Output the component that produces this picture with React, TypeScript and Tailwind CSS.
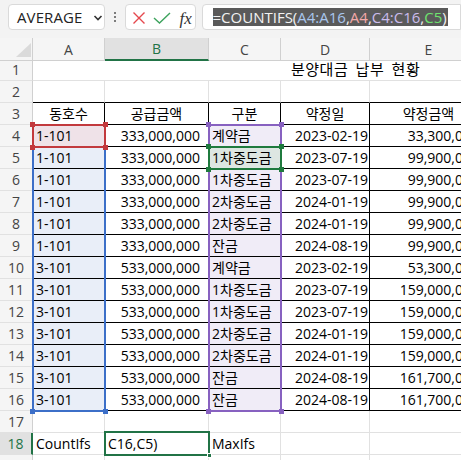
import React from "react";

const data: string[][] = [
  ["1-101", "333,000,000", "계약금", "2023-02-19", "33,300,000"],
  ["1-101", "333,000,000", "1차중도금", "2023-07-19", "99,900,000"],
  ["1-101", "333,000,000", "1차중도금", "2023-07-19", "99,900,000"],
  ["1-101", "333,000,000", "2차중도금", "2024-01-19", "99,900,000"],
  ["1-101", "333,000,000", "2차중도금", "2024-01-19", "99,900,000"],
  ["1-101", "333,000,000", "잔금", "2024-08-19", "99,900,000"],
  ["3-101", "533,000,000", "계약금", "2023-02-19", "53,300,000"],
  ["3-101", "533,000,000", "1차중도금", "2023-07-19", "159,000,000"],
  ["3-101", "533,000,000", "1차중도금", "2023-07-19", "159,000,000"],
  ["3-101", "533,000,000", "2차중도금", "2024-01-19", "159,000,000"],
  ["3-101", "533,000,000", "2차중도금", "2024-01-19", "159,000,000"],
  ["3-101", "533,000,000", "잔금", "2024-08-19", "161,700,000"],
  ["3-101", "533,000,000", "잔금", "2024-08-19", "161,700,000"],
];

const ROW = "grid grid-cols-[33px_72px_104px_72px_89px_118px] h-[22px]";
const HDR =
  "h-[22px] flex items-center justify-center bg-[#f5f5f5] border-r border-b border-r-[#d0d0d0] border-b-[#e1e1e1] text-[14px] text-[#444]";
const GCELL = "h-[22px] flex items-center overflow-hidden whitespace-nowrap border-r border-b border-[#e1e1e1]";
const TCELL = "h-[22px] flex items-center overflow-hidden whitespace-nowrap border-r border-b border-black";

function Corners({ c }: { c: string }) {
  return (
    <>
      <div className={`absolute -left-[2px] -top-[2px] w-[5px] h-[5px] ${c}`} />
      <div className={`absolute -right-[2px] -top-[2px] w-[5px] h-[5px] ${c}`} />
      <div className={`absolute -left-[2px] -bottom-[2px] w-[5px] h-[5px] ${c}`} />
      <div className={`absolute -right-[2px] -bottom-[2px] w-[5px] h-[5px] ${c}`} />
    </>
  );
}

export default function App() {
  return (
    <div className="w-[461px] h-[460px] overflow-hidden bg-white font-['Open_Sans','Noto_Sans_CJK_KR',sans-serif] text-black">
      {/* Toolbar */}
      <div className="h-[38px] bg-[#f3f3f3] flex items-start pt-[4px] pl-[8px]">
        <div className="w-[101px] h-[26px] bg-white border border-[#dadada] rounded-[4px] flex items-center pl-[8px] relative">
          <span className="text-[15px] text-[#222] tracking-[0.1px]">AVERAGE</span>
          <svg className="absolute left-[84px] top-[9px]" width="10" height="8" viewBox="0 0 10 8">
            <path d="M1.5 2 L5 5.5 L8.5 2" fill="none" stroke="#333" strokeWidth="1.6" />
          </svg>
        </div>
        <div className="w-[21px] h-[26px] flex flex-col items-center justify-center gap-[2px]">
          <div className="w-[2px] h-[2px] rounded-full bg-[#555]" />
          <div className="w-[2px] h-[2px] rounded-full bg-[#555]" />
          <div className="w-[2px] h-[2px] rounded-full bg-[#555]" />
        </div>
        <div className="w-[73px] h-[26px] bg-white border border-[#dadada] rounded-[4px] flex items-center relative">
          <svg className="absolute left-[6px] top-[6px]" width="14" height="14" viewBox="0 0 14 14">
            <path d="M1.5 1.5 L12.5 12.5 M12.5 1.5 L1.5 12.5" stroke="#e5484d" strokeWidth="1.4" fill="none" />
          </svg>
          <svg className="absolute left-[27px] top-[7px]" width="18" height="12" viewBox="0 0 18 12">
            <path d="M1 6 L6.5 11 L17 1" stroke="#3da35d" strokeWidth="1.4" fill="none" />
          </svg>
          <span className="absolute left-[53px] top-[1px] font-['Liberation_Serif',serif] italic text-[17px] text-[#333]">fx</span>
        </div>
        <div className="ml-[6px] w-[270px] h-[26px] bg-white border border-[#dadada] rounded-l-[4px] flex items-center pl-[10px]">
          <span className="bg-[#5a5a5a] text-[15px] leading-[18px] h-[18px] pr-[1px] whitespace-nowrap">
            <span className="text-[#f2f2f2]">=COUNTIFS(</span>
            <span className="text-[#a9c6ee]">A4:A16</span>
            <span className="text-[#f2f2f2]">,</span>
            <span className="text-[#f3a9a9]">A4</span>
            <span className="text-[#f2f2f2]">,</span>
            <span className="text-[#cbbcec]">C4:C16</span>
            <span className="text-[#f2f2f2]">,</span>
            <span className="text-[#6fe36f]">C5</span>
            <span className="text-[#f2f2f2]">)</span>
          </span>
        </div>
      </div>

      {/* Grid */}
      <div className="relative w-[488px]">
        {/* Column headers */}
        <div className="grid grid-cols-[33px_72px_104px_72px_89px_118px] h-[21px]">
          <div className="relative bg-[#f5f5f5] border-r border-b border-[#d0d0d0]">
            <svg className="absolute left-[16px] top-[5px]" width="15" height="14" viewBox="0 0 15 14">
              <path d="M15 0 L15 14 L0 14 Z" fill="#dadada" />
            </svg>
          </div>
          <div className="flex items-center justify-center bg-[#f5f5f5] border-r border-b border-[#d0d0d0] text-[14px] text-[#444]">A</div>
          <div className="flex items-center justify-center bg-[#e1e1e1] border-r border-[#d0d0d0] border-b-2 border-b-[#217346] text-[14px] text-[#217346]">B</div>
          <div className="flex items-center justify-center bg-[#f5f5f5] border-r border-b border-[#d0d0d0] text-[14px] text-[#444]">C</div>
          <div className="flex items-center justify-center bg-[#f5f5f5] border-r border-b border-[#d0d0d0] text-[14px] text-[#444]">D</div>
          <div className="flex items-center justify-center bg-[#f5f5f5] border-r border-b border-[#d0d0d0] text-[14px] text-[#444]">E</div>
        </div>

        {/* Row 1 */}
        <div className={ROW}>
          <div className={HDR}>1</div>
          <div className="col-span-5 h-[22px] flex items-center border-b border-[#e1e1e1] pl-[258px] text-[15px] tracking-[0.5px] [word-spacing:3px] whitespace-nowrap">
            분양대금 납부 현황
          </div>
        </div>

        {/* Row 2 */}
        <div className={ROW}>
          <div className={HDR}>2</div>
          <div className="h-[22px] border-r border-r-[#e1e1e1] border-b border-b-black" />
          <div className="h-[22px] border-r border-r-[#e1e1e1] border-b border-b-black" />
          <div className="h-[22px] border-r border-r-[#e1e1e1] border-b border-b-black" />
          <div className="h-[22px] border-r border-r-[#e1e1e1] border-b border-b-black" />
          <div className="h-[22px] border-r border-r-[#e1e1e1] border-b border-b-black" />
        </div>

        {/* Row 3 header */}
        <div className={ROW}>
          <div className={HDR}>3</div>
          <div className={`${TCELL} justify-center text-[14px]`}>동호수</div>
          <div className={`${TCELL} justify-center text-[14px]`}>공급금액</div>
          <div className={`${TCELL} justify-center text-[14px]`}>구분</div>
          <div className={`${TCELL} justify-center text-[14px]`}>약정일</div>
          <div className={`${TCELL} justify-center text-[14px]`}>약정금액</div>
        </div>

        {/* Data rows */}
        {data.map((r, i) => {
          const n = i + 4;
          const aBg = i === 0 ? "bg-[#efe2e8]" : "bg-[#e9eef8]";
          const cBg = i === 1 ? "bg-[#dde6e2]" : "bg-[#f0ecf7]";
          return (
            <div key={n} className={ROW}>
              <div className={HDR}>{n}</div>
              <div className={`${TCELL} ${aBg} pl-[3px] text-[14px]`}>{r[0]}</div>
              <div className={`${TCELL} justify-end pr-[8px] text-[14px]`}>{r[1]}</div>
              <div className={`${TCELL} ${cBg} pl-[3px] text-[14px]`}>{r[2]}</div>
              <div className={`${TCELL} justify-end pr-[1px] text-[14px]`}>{r[3]}</div>
              <div className={`${TCELL} justify-end pr-[8px] text-[14px]`}>{r[4]}</div>
            </div>
          );
        })}

        {/* Row 17 */}
        <div className={ROW}>
          <div className={HDR}>17</div>
          <div className={GCELL} />
          <div className={GCELL} />
          <div className={GCELL} />
          <div className={GCELL} />
          <div className={GCELL} />
        </div>

        {/* Row 18 */}
        <div className={ROW}>
          <div className="h-[22px] flex items-center justify-center bg-[#e1e1e1] border-r-2 border-r-[#217346] border-b border-b-[#e1e1e1] text-[14px] text-[#217346]">18</div>
          <div className={`${GCELL} pl-[3px] text-[14px]`}>CountIfs</div>
          <div className={`${GCELL} pl-[3px] text-[14px]`}>C16,C5)</div>
          <div className={`${GCELL} pl-[3px] text-[14px]`}>MaxIfs</div>
          <div className={GCELL} />
          <div className={GCELL} />
        </div>

        {/* Row 19 */}
        <div className={ROW}>
          <div className={HDR}>19</div>
          <div className={GCELL} />
          <div className={GCELL} />
          <div className={GCELL} />
          <div className={GCELL} />
          <div className={GCELL} />
        </div>

        {/* Range outlines (overlays) */}
        <div className="absolute left-[32px] top-[86px] w-[74px] h-[288px]">
          <div className="absolute inset-0 border-2 border-[#3c6fc8]" />
          <Corners c="bg-[#3c6fc8]" />
        </div>
        <div className="absolute left-[32px] top-[86px] w-[74px] h-[24px]">
          <div className="absolute inset-0 border-2 border-[#c2393d]" />
          <Corners c="bg-[#c2393d]" />
        </div>
        <div className="absolute left-[208px] top-[86px] w-[74px] h-[288px]">
          <div className="absolute inset-0 border-2 border-[#8761c0]" />
          <Corners c="bg-[#8761c0]" />
        </div>
        <div className="absolute left-[208px] top-[108px] w-[74px] h-[24px]">
          <div className="absolute inset-0 border-2 border-[#1f7a3e]" />
          <Corners c="bg-[#1f7a3e]" />
        </div>
        <div className="absolute left-[104px] top-[393px] w-[106px] h-[25px]">
          <div className="absolute inset-0 border-2 border-[#217346]" />
          <div className="absolute -right-[2px] -bottom-[2px] w-[5px] h-[5px] bg-[#217346] border border-white" />
        </div>
      </div>
    </div>
  );
}
